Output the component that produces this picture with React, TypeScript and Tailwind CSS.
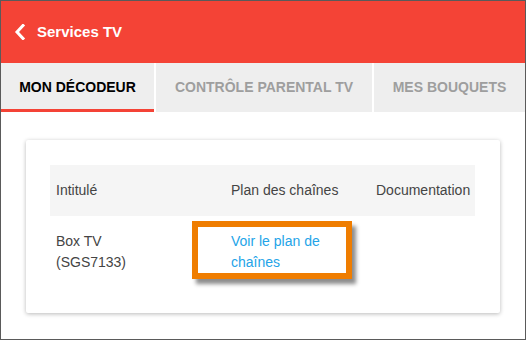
export default function App() {
    return (
        <div
            className="w-[526px] h-[340px] border border-[#5a5a5a] bg-white overflow-hidden"
            style={{ fontFamily: '"Liberation Sans", Arial, sans-serif' }}
        >
            {/* Header */}
            <div className="h-[62px] bg-[#f44336] flex items-center pl-[13px]">
                <svg width="12" height="16" viewBox="0 0 12 16" className="mr-[11px]">
                    <polyline points="9,1.5 3,8 9,14.5" fill="none" stroke="white" strokeWidth="3" strokeLinecap="square" />
                </svg>
                <span className="text-[15px] font-bold text-white">Services TV</span>
            </div>

            {/* Tabs */}
            <div className="h-[49px] flex gap-[2px] bg-white">
                <div className="w-[153px] bg-[#eeeeee] flex flex-col">
                    <div className="flex-1 flex items-center justify-center pt-[2px] text-[14px] font-bold text-black">MON DÉCODEUR</div>
                    <div className="h-[3px] bg-[#f44336]"></div>
                </div>
                <div className="w-[216px] bg-[#eeeeee] flex items-center justify-center pb-[1px] text-[14px] font-bold text-[#9e9e9e]">
                    CONTRÔLE PARENTAL TV
                </div>
                <div className="flex-1 bg-[#eeeeee] flex items-center justify-center pb-[1px] text-[14px] font-bold text-[#9e9e9e]">
                    MES BOUQUETS
                </div>
            </div>

            {/* Content */}
            <div className="px-[25px] pt-[28px]">
                <div className="bg-white rounded-[2px] shadow-[0_1px_4px_rgba(0,0,0,0.28)] pt-[25px] pb-[25px] pl-[24px] pr-[25px]">
                    <div className="text-[14px] text-[#444]">
                        <div className="grid grid-cols-[175px_145px_105px] h-[51px] items-center bg-[#f5f5f5]">
                            <div className="px-[6px]">Intitulé</div>
                            <div className="px-[6px]">Plan des chaînes</div>
                            <div className="px-[6px]">Documentation</div>
                        </div>
                        <div className="relative grid grid-cols-[175px_145px_105px] py-[15px] leading-[21px]">
                            <div className="px-[6px]">Box TV<br />(SGS7133)</div>
                            <div className="px-[6px] text-[#24a4e8]">Voir le plan de chaînes</div>
                            <div className="px-[6px]"></div>
                            {/* highlight annotation */}
                            <div className="absolute left-[142px] top-[5px] w-[160px] h-[58px] border-[6px] border-[#ef7d00] shadow-[4px_5px_4px_rgba(0,0,0,0.45)] pointer-events-none"></div>
                        </div>
                    </div>
                </div>
            </div>
        </div>
    );
}
